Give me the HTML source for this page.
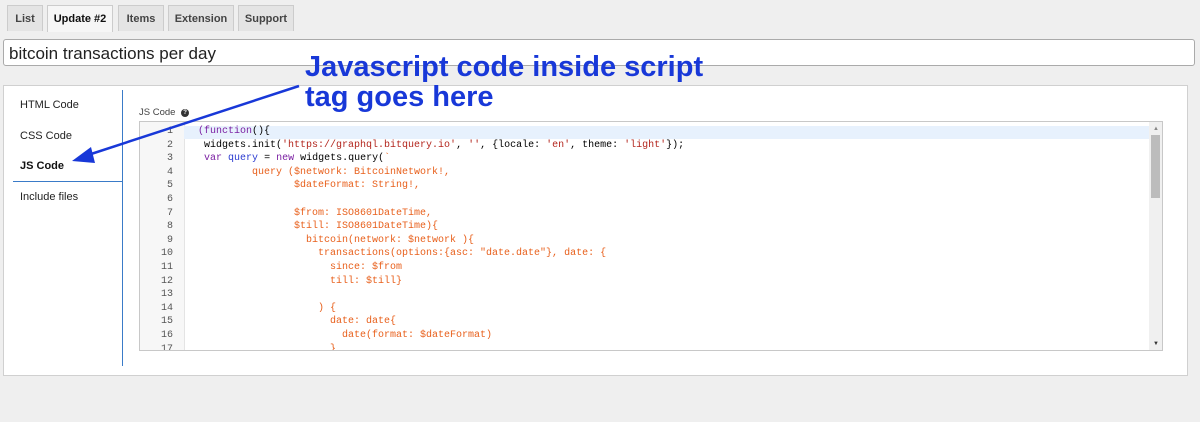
<!DOCTYPE html>
<html><head><style>
body{margin:0;width:1200px;height:422px;background:#efefef;font-family:"Liberation Sans",sans-serif;position:relative;overflow:hidden}
.tab{position:absolute;top:5px;height:25px;border:1px solid #ccc;border-bottom:none;background:#e4e4e4;font-size:11px;font-weight:bold;color:#444;line-height:26px;text-align:center}
.tab.on{background:#f6f6f6;color:#111;height:26px}
.inp{position:absolute;left:3px;top:39px;width:1192px;height:27px;border:1px solid #aaa;border-radius:3px;background:#fff;font-size:17px;line-height:27px;padding-left:5px;box-sizing:border-box;color:#222}
.panel{position:absolute;left:3px;top:85px;width:1185px;height:291px;background:#fff;border:1px solid #d0d0d0;box-sizing:border-box}
.menu{position:absolute;left:20px;font-size:11px;color:#222}
.ed{position:absolute;left:139px;top:121px;width:1024px;height:230px;border:1px solid #c8c8c8;box-sizing:border-box;background:#fff;overflow:hidden}
.gut{position:absolute;left:0;top:0;width:44px;height:100%;background:#f7f7f7;border-right:1px solid #e4e4e4}
.code{position:absolute;left:0;top:3px;font-family:"Liberation Mono",monospace;font-size:10px;line-height:13.6px;white-space:pre}
.ln{display:inline-block;width:33px;text-align:right;color:#555;margin-right:7px}
.k{color:#7a1fa2}.s{color:#b3261e}.o{color:#e8601c}.b{color:#2a3ad0}
.ann{position:absolute;left:305px;top:52px;font-size:29px;font-weight:bold;color:#1838d8;line-height:30px}
</style></head><body>
<div class="tab" style="left:7px;width:34px">List</div>
<div class="tab on" style="left:47px;width:64px">Update #2</div>
<div class="tab" style="left:118px;width:44px">Items</div>
<div class="tab" style="left:168px;width:64px">Extension</div>
<div class="tab" style="left:238px;width:54px">Support</div>
<div class="inp">bitcoin transactions per day</div>
<div class="panel"></div>
<div class="menu" style="top:99px">HTML Code</div>
<div class="menu" style="top:130px">CSS Code</div>
<div class="menu" style="top:160px;font-weight:bold;color:#111">JS Code</div>
<div style="position:absolute;left:13px;top:181px;width:109px;height:1px;background:#3a7bc8"></div>
<div class="menu" style="top:191px">Include files</div>
<div style="position:absolute;left:122px;top:90px;width:1px;height:276px;background:#3a7bc8"></div>
<div style="position:absolute;left:139px;top:107px;font-size:9.5px;color:#444">JS Code <span style="display:inline-block;width:8px;height:8px;border-radius:50%;background:#333;color:#fff;font-size:6px;text-align:center;line-height:8px;vertical-align:1px;margin-left:3px;font-weight:bold">?</span></div>
<div class="ed">
<div class="gut"></div>
<div style="position:absolute;left:44px;top:4px;width:965px;height:13px;background:#e7f1fd"></div>
<div style="position:absolute;right:0;top:0;width:13px;height:100%;background:#f0f0f0"></div>
<div style="position:absolute;right:2px;top:13px;width:9px;height:63px;background:#bcbcbc"></div>
<div style="position:absolute;right:3px;top:4px;font-size:6px;color:#888">▲</div>
<div style="position:absolute;right:3px;bottom:3px;font-size:6px;color:#333">▼</div>
<div class="code"><span class="ln">1</span>   <span class="k">(function</span>(){
<span class="ln">2</span>    widgets.init(<span class="s">'https://graphql.bitquery.io'</span>, <span class="s">''</span>, {locale: <span class="s">'en'</span>, theme: <span class="s">'light'</span>});
<span class="ln">3</span>    <span class="k">var</span> <span class="b">query</span> = <span class="k">new</span> widgets.query(<span class="o">`</span>
<span class="ln">4</span><span class="o">            query ($network: BitcoinNetwork!,</span>
<span class="ln">5</span><span class="o">                   $dateFormat: String!,</span>
<span class="ln">6</span>
<span class="ln">7</span><span class="o">                   $from: ISO8601DateTime,</span>
<span class="ln">8</span><span class="o">                   $till: ISO8601DateTime){</span>
<span class="ln">9</span><span class="o">                     bitcoin(network: $network ){</span>
<span class="ln">10</span><span class="o">                       transactions(options:{asc: "date.date"}, date: {</span>
<span class="ln">11</span><span class="o">                         since: $from</span>
<span class="ln">12</span><span class="o">                         till: $till}</span>
<span class="ln">13</span>
<span class="ln">14</span><span class="o">                       ) {</span>
<span class="ln">15</span><span class="o">                         date: date{</span>
<span class="ln">16</span><span class="o">                           date(format: $dateFormat)</span>
<span class="ln">17</span><span class="o">                         }</span></div>
</div>
<div class="ann">Javascript code inside script<br>tag goes here</div>
<svg style="position:absolute;left:0;top:0" width="1200" height="422"><line x1="299" y1="86" x2="88" y2="155" stroke="#1838d8" stroke-width="2.5"/><polygon points="72,161 91,147 95,163" fill="#1838d8"/></svg>
</body></html>
